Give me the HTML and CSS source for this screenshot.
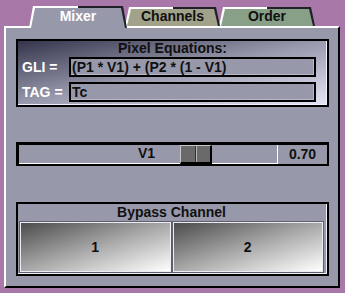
FILE: index.html
```html
<!DOCTYPE html>
<html>
<head>
<meta charset="utf-8">
<link rel="stylesheet" href="styles.css">
</head>
<body>
<div class="app">
  <div class="tabs">
    <div class="tab tab-mixer"><div class="tab-face">Mixer</div></div>
    <div class="tab tab-channels"><div class="tab-face">Channels</div></div>
    <div class="tab tab-order"><div class="tab-face">Order</div></div>
  </div>
  <div class="panel">
    <div class="equations">
      <div class="eq-title">Pixel Equations:</div>
      <div class="eq-row">
        <span class="eq-label">GLI =</span>
        <div class="eq-field">(P1 * V1) + (P2 * (1 - V1)</div>
      </div>
      <div class="eq-row eq-row-tag">
        <span class="eq-label">TAG =</span>
        <div class="eq-field">Tc</div>
      </div>
    </div>
    <div class="slider">
      <div class="track">
        <span class="track-label">V1</span>
        <div class="thumb" style="left:161px"><span class="grip"></span><span class="grip grip-right"></span></div>
      </div>
      <div class="value">0.70</div>
    </div>
    <div class="bypass">
      <div class="bypass-title">Bypass Channel</div>
      <div class="bypass-buttons">
        <button class="bypass-btn">1</button>
        <button class="bypass-btn">2</button>
      </div>
    </div>
  </div>
</div>
</body>
</html>
```
FILE: styles.css
```css
html, body {
  margin: 0;
  padding: 0;
}
body {
  background: #a878a8;
  font-family: "Liberation Sans", Arial, sans-serif;
  font-weight: bold;
  font-size: 14px;
  color: #101010;
}
.app {
  width: 345px;
  height: 293px;
}
.tabs {
  display: flex;
  align-items: flex-end;
  height: 26px;
  padding-left: 29px;
}
.tab {
  box-sizing: border-box;
  clip-path: polygon(4px 0, calc(100% - 4px) 0, 100% 100%, 0 100%);
  background: linear-gradient(to right, #ffffff 50%, #202028 50%);
  padding: 2px 2px 0 2px;
}
.tab-face {
  height: 100%;
  clip-path: polygon(4px 0, calc(100% - 4px) 0, 100% 100%, 0 100%);
  text-align: center;
  line-height: 14px;
}
.tab-mixer {
  position: relative;
  z-index: 2;
  width: 98px;
  height: 22px;
  margin-bottom: -2px;
}
.tab-mixer .tab-face {
  background: #9898ab;
  color: #ffffff;
  line-height: 16px;
}
.tab-channels {
  width: 95px;
  height: 19px;
  margin-left: -2px;
  position: relative;
  z-index: 1;
}
.tab-channels .tab-face {
  background: #a2a28a;
}
.tab-order {
  width: 96px;
  height: 19px;
  margin-left: -1px;
}
.tab-order .tab-face {
  background: #88a088;
}
.panel {
  box-sizing: border-box;
  margin-left: 4px;
  width: 336px;
  height: 262px;
  background: #9898ab;
  border: 2px solid;
  border-color: #ffffff #000000 #000000 #ffffff;
  padding: 11px 0 0 10px;
}
.equations {
  box-sizing: border-box;
  width: 313px;
  height: 68px;
  border: 2px solid #000;
  box-shadow: inset -1px -1px 0 #f0f0ff;
  background: linear-gradient(to bottom right, #34344c 0%, #9a9aae 50%, #e4e4f4 100%);
  padding: 0 0 0 4px;
}
.eq-title {
  text-align: center;
  line-height: 14px;
  height: 14px;
  padding-right: 4px;
}
.eq-row {
  display: flex;
  align-items: center;
  margin-top: 2px;
}
.eq-row-tag {
  margin-top: 5px;
}
.eq-label {
  width: 47px;
  color: #ffffff;
}
.eq-field {
  box-sizing: border-box;
  width: 247px;
  height: 20px;
  border: 2px solid #000;
  background: #9898ab;
  box-shadow: inset -1px -1px 0 #b8b8c8;
  line-height: 16px;
  padding-left: 1px;
  white-space: nowrap;
}
.slider {
  box-sizing: border-box;
  display: flex;
  width: 313px;
  height: 24px;
  margin-top: 35px;
  border-style: solid;
  border-color: #000;
  border-width: 3px 2px 2px 3px;
}
.track {
  position: relative;
  box-sizing: border-box;
  width: 259px;
  height: 19px;
  border-right: 1px solid #ffffff;
  border-bottom: 1px solid #ffffff;
  text-align: center;
  line-height: 16px;
}
.track-label {
  padding-right: 3px;
}
.thumb {
  position: absolute;
  top: 0;
  box-sizing: border-box;
  width: 32px;
  height: 19px;
  display: flex;
  border-style: solid;
  border-width: 1px 2px 2px 1px;
  border-color: #c8c8c8 #000 #000 #c8c8c8;
  background: #6a6a6a;
}
.grip {
  flex: 1;
}
.grip-right {
  border-left: 1px solid #303030;
  box-shadow: inset 1px 0 0 #b8b8b8;
}
.value {
  flex: 1;
  text-align: center;
  line-height: 18px;
}
.bypass {
  box-sizing: border-box;
  width: 313px;
  height: 74px;
  margin-top: 36px;
  border: 2px solid #000;
  box-shadow: inset -1px -1px 0 #f0f0ff;
  padding: 0 4px 0 2px;
}
.bypass-title {
  text-align: center;
  line-height: 16px;
  height: 16px;
}
.bypass-buttons {
  display: grid;
  grid-template-columns: 1fr 1fr;
  gap: 2px;
  margin-top: 2px;
}
.bypass-btn {
  box-sizing: border-box;
  height: 50px;
  margin: 0;
  padding: 0;
  border: 1px solid #ececf4;
  box-shadow: 0 0 0 1px #60606c;
  background: linear-gradient(to bottom right, #4c4c4c 0%, #a8a8a8 50%, #ffffff 100%);
  font-family: "Liberation Sans", Arial, sans-serif;
  font-weight: bold;
  font-size: 14px;
  color: #101010;
}
```
